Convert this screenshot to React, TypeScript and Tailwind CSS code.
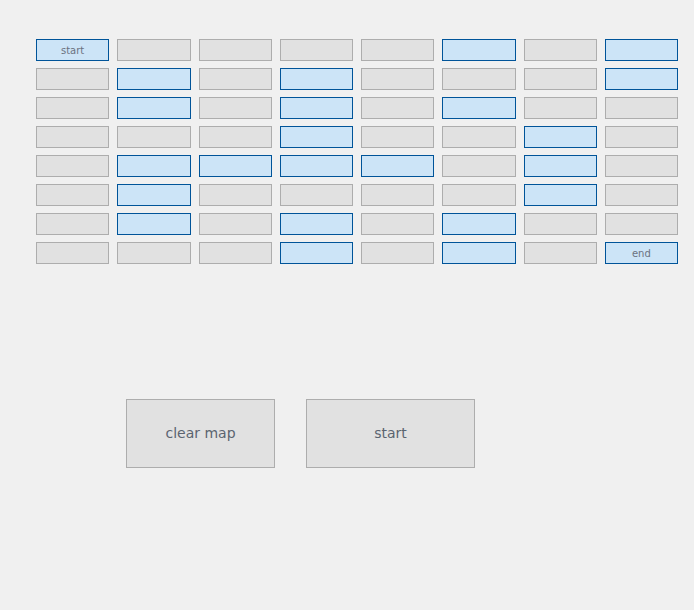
const blue: number[][] = [
  [0, 5, 7],
  [1, 3, 7],
  [1, 3, 5],
  [3, 6],
  [1, 2, 3, 4, 6],
  [1, 6],
  [1, 3, 5],
  [3, 5, 7],
]

const font = { fontFamily: '"Segoe Print", "Comic Sans MS", "DejaVu Sans", sans-serif' }

export default function App() {
  return (
    <div className="w-[694px] h-[610px] bg-[#f0f0f0] overflow-hidden" style={font}>
      <div className="pt-[39px] pl-[36px]">
        <div className="grid grid-cols-8 w-[642px] gap-x-2 gap-y-[7px]">
          {blue.map((row, r) =>
            Array.from({ length: 8 }).map((_, c) => {
              const on = row.includes(c)
              let label = ""
              if (r === 0 && c === 0) label = "start"
              if (r === 7 && c === 7) label = "end"
              return (
                <div
                  key={`${r}-${c}`}
                  className={
                    on
                      ? "h-[22px] border border-[#005499] bg-[#cce4f7] flex items-center justify-center text-[10px] text-[#6b7280]"
                      : "h-[22px] border border-[#adadad] bg-[#e1e1e1] flex items-center justify-center text-[10px] text-[#6b7280]"
                  }
                >
                  {label}
                </div>
              )
            })
          )}
        </div>
      </div>
      <div className="flex pl-[126px] pt-[135px] gap-[31px]">
        <div className="w-[149px] h-[69px] border border-[#adadad] bg-[#e1e1e1] flex items-center justify-center text-[14px] text-[#5b6470]">
          clear map
        </div>
        <div className="w-[169px] h-[69px] border border-[#adadad] bg-[#e1e1e1] flex items-center justify-center text-[14px] text-[#5b6470]">
          start
        </div>
      </div>
    </div>
  )
}
